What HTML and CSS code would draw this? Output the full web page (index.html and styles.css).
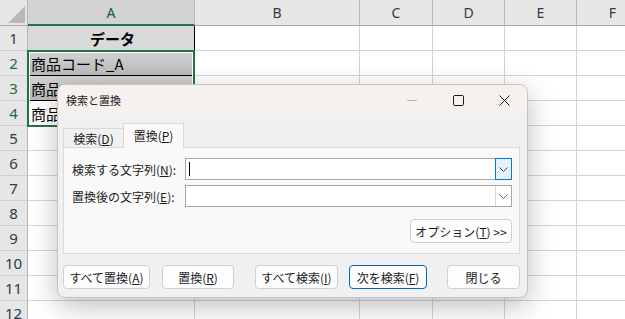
FILE: index.html
```html
<!DOCTYPE html>
<html lang="ja">
<head>
    <meta charset="UTF-8">
    <title>検索と置換</title>
    <link rel="stylesheet" href="styles.css">
</head>
<body>
    <div class="sheet">
        <div class="corner">
            <svg width="28" height="26" viewBox="0 0 28 26"><polygon points="25,6 25,23 8,23" fill="#b9b9b9"/></svg>
        </div>
        <div class="ch ch-sel">A</div>
        <div class="ch">B</div>
        <div class="ch">C</div>
        <div class="ch">D</div>
        <div class="ch">E</div>
        <div class="ch">F</div>

        <div class="rh">1</div>
        <div class="c a1">データ</div>
        <div class="c"></div><div class="c"></div><div class="c"></div><div class="c"></div><div class="c"></div>

        <div class="rh rh-sel">2</div>
        <div class="c a-fill">商品コード_A</div>
        <div class="c"></div><div class="c"></div><div class="c"></div><div class="c"></div><div class="c"></div>

        <div class="rh rh-sel">3</div>
        <div class="c a-fill">商品コード_B</div>
        <div class="c"></div><div class="c"></div><div class="c"></div><div class="c"></div><div class="c"></div>

        <div class="rh rh-sel">4</div>
        <div class="c a-active">商品コード_C</div>
        <div class="c"></div><div class="c"></div><div class="c"></div><div class="c"></div><div class="c"></div>

        <div class="rh">5</div>
        <div class="c"></div><div class="c"></div><div class="c"></div><div class="c"></div><div class="c"></div><div class="c"></div>
        <div class="rh">6</div>
        <div class="c"></div><div class="c"></div><div class="c"></div><div class="c"></div><div class="c"></div><div class="c"></div>
        <div class="rh">7</div>
        <div class="c"></div><div class="c"></div><div class="c"></div><div class="c"></div><div class="c"></div><div class="c"></div>
        <div class="rh">8</div>
        <div class="c"></div><div class="c"></div><div class="c"></div><div class="c"></div><div class="c"></div><div class="c"></div>
        <div class="rh">9</div>
        <div class="c"></div><div class="c"></div><div class="c"></div><div class="c"></div><div class="c"></div><div class="c"></div>
        <div class="rh">10</div>
        <div class="c"></div><div class="c"></div><div class="c"></div><div class="c"></div><div class="c"></div><div class="c"></div>
        <div class="rh">11</div>
        <div class="c"></div><div class="c"></div><div class="c"></div><div class="c"></div><div class="c"></div><div class="c"></div>
        <div class="rh">12</div>
        <div class="c"></div><div class="c"></div><div class="c"></div><div class="c"></div><div class="c"></div><div class="c"></div>

        <!-- selected range A2:A4 -->
        <div class="sel-box"></div>
    </div>

    <div class="dialog">
        <div class="titlebar">
            <span class="title">検索と置換</span>
            <div class="caption">
                <div class="cap-btn">
                    <svg width="10" height="10" viewBox="0 0 10 10"><line x1="0" y1="5.5" x2="10" y2="5.5" stroke="#b4b4b4" stroke-width="1"/></svg>
                </div>
                <div class="cap-btn">
                    <svg width="11" height="11" viewBox="0 0 11 11"><rect x="0.5" y="0.5" width="10" height="10" rx="1.2" fill="none" stroke="#1b1b1b" stroke-width="1"/></svg>
                </div>
                <div class="cap-btn">
                    <svg width="11" height="11" viewBox="0 0 11 11"><path d="M0.5 0.5 L10.5 10.5 M10.5 0.5 L0.5 10.5" stroke="#1b1b1b" stroke-width="1"/></svg>
                </div>
            </div>
        </div>

        <div class="body">
            <div class="tabs">
                <div class="tab">検索(<u>D</u>)</div>
                <div class="tab tab-active">置換(<u>P</u>)</div>
            </div>
            <div class="panel">
                <div class="field">
                    <label class="field-label">検索する文字列(<u>N</u>):</label>
                    <div class="combo">
                        <div class="combo-text"><span class="caret"></span></div>
                        <div class="combo-drop combo-drop-hot">
                            <svg width="9" height="5" viewBox="0 0 9 5"><path d="M0.5 0.5 L4.5 4.5 L8.5 0.5" fill="none" stroke="#444" stroke-width="1"/></svg>
                        </div>
                    </div>
                </div>
                <div class="field field-second">
                    <label class="field-label">置換後の文字列(<u>E</u>):</label>
                    <div class="combo">
                        <div class="combo-text"></div>
                        <div class="combo-drop">
                            <svg width="9" height="5" viewBox="0 0 9 5"><path d="M0.5 0.5 L4.5 4.5 L8.5 0.5" fill="none" stroke="#666" stroke-width="1"/></svg>
                        </div>
                    </div>
                </div>
                <div class="option-row">
                    <button class="btn btn-option">オプション(<u>T</u>) &gt;&gt;</button>
                </div>
            </div>

            <div class="actions">
                <button class="btn btn-replace-all">すべて置換(<u>A</u>)</button>
                <button class="btn btn-replace">置換(<u>R</u>)</button>
                <button class="btn btn-find-all">すべて検索(<u>I</u>)</button>
                <button class="btn btn-find-next btn-default">次を検索(<u>F</u>)</button>
                <button class="btn btn-close">閉じる</button>
            </div>
        </div>
    </div>
</body>
</html>
```

FILE: styles.css
```css
body {
    margin: 0;
    width: 625px;
    height: 319px;
    overflow: hidden;
    position: relative;
    background: #ffffff;
}

/* spreadsheet */
.sheet {
    position: relative;
    display: grid;
    grid-template-columns: 28px 167px 165px 73px 72px 72px 72px;
    grid-template-rows: 26px;
    grid-auto-rows: 25px;
    font-family: "Noto Sans CJK JP", sans-serif;
}
.corner {
    background: #e6e6e6;
    border-right: 1px solid #b5b5b5;
    border-bottom: 1px solid #a8a8a8;
    box-sizing: border-box;
}
.corner svg {
    display: block;
}
.ch {
    background: #e6e6e6;
    border-right: 1px solid #b8b8b8;
    border-bottom: 1px solid #a8a8a8;
    box-sizing: border-box;
    display: flex;
    align-items: center;
    justify-content: center;
    font-family: "Noto Sans", sans-serif;
    font-size: 14px;
    color: #2b3a4a;
}
.ch-sel {
    background: #d3d3d3;
    color: #185c37;
    border-bottom: 2px solid #217346;
}
.rh {
    background: #e6e6e6;
    border-right: 1px solid #b5b5b5;
    border-bottom: 1px solid #cfcfcf;
    box-sizing: border-box;
    display: flex;
    align-items: center;
    justify-content: center;
    font-family: "Noto Sans", sans-serif;
    font-size: 15px;
    color: #2b3a4a;
}
.rh-sel {
    color: #1d6a45;
}
.c {
    border-right: 1px solid #d4d4d4;
    border-bottom: 1px solid #d4d4d4;
    box-sizing: border-box;
    display: flex;
    align-items: center;
    padding-left: 3px;
    font-size: 15px;
    color: #000000;
    white-space: nowrap;
    overflow: hidden;
}
.a1 {
    background: #d9d9d9;
    justify-content: center;
    font-weight: bold;
    border-right: 1px solid #000000;
    border-bottom: 1px solid #000000;
}
.a-fill {
    background: linear-gradient(#d3d3d3, #bababa);
    border-right: 1px solid #000000;
    border-bottom: 1px solid #000000;
}
.a-active {
    background: #ffffff;
    border-right: 1px solid #000000;
    border-bottom: 1px solid #000000;
}
.sel-box {
    position: absolute;
    left: 27px;
    top: 50px;
    width: 168px;
    height: 77px;
    box-sizing: border-box;
    border: 2px solid #217346;
    box-shadow: inset 0 0 0 1px #ffffff;
}

/* find & replace dialog */
.dialog {
    position: absolute;
    left: 57px;
    top: 84px;
    width: 471px;
    height: 214px;
    box-sizing: border-box;
    border: 1px solid #c4c4c4;
    border-radius: 8px;
    background: #f0f0f0;
    box-shadow: 0 8px 28px rgba(0, 0, 0, 0.26);
    overflow: hidden;
    font-family: "Noto Sans CJK JP", sans-serif;
    font-size: 12px;
    color: #1b1b1b;
}
.titlebar {
    height: 30px;
    background: #f6f1ec;
    display: flex;
    align-items: center;
}
.title {
    padding-left: 8px;
    font-size: 11px;
}
.caption {
    margin-left: auto;
    display: flex;
}
.cap-btn {
    width: 46px;
    height: 30px;
    display: flex;
    align-items: center;
    justify-content: center;
}
.cap-btn svg {
    display: block;
}
.body {
    padding: 0 7px 0 5px;
}
.tabs {
    display: flex;
    align-items: flex-end;
    height: 25px;
    margin-top: 8px;
    margin-bottom: -1px;
    position: relative;
}
.tab {
    width: 60px;
    height: 20px;
    box-sizing: border-box;
    border: 1px solid #dadada;
    border-right: none;
    border-bottom: none;
    display: flex;
    align-items: center;
    justify-content: center;
    color: #1b1b1b;
}
.tab-active {
    width: 61px;
    height: 25px;
    border-right: 1px solid #dadada;
    background: #f9f9f9;
    padding-bottom: 2px;
}
.panel {
    height: 107px;
    box-sizing: border-box;
    border: 1px solid #dadada;
    background: #f9f9f9;
    padding: 10px 7px 0 8px;
}
.field {
    display: flex;
    align-items: center;
    height: 22px;
}
.field-second {
    margin-top: 5px;
}
.field-label {
    width: 113px;
    flex: none;
}
.combo {
    flex: 1;
    height: 22px;
    box-sizing: border-box;
    border: 1px solid #a6a6a6;
    background: #ffffff;
    display: flex;
}
.combo-text {
    flex: 1;
    display: flex;
    align-items: center;
    padding-left: 3px;
}
.caret {
    width: 1px;
    height: 14px;
    background: #000000;
}
.combo-drop {
    width: 16px;
    box-sizing: border-box;
    border-left: 1px solid #d6d6d6;
    display: flex;
    align-items: center;
    justify-content: center;
}
.combo-drop-hot {
    margin: -1px -1px -1px 0;
    width: 17px;
    border: 1px solid #0078d4;
    background: #e5f1fb;
}
.option-row {
    display: flex;
    justify-content: flex-end;
    margin-top: 12px;
}
.btn {
    height: 24px;
    box-sizing: border-box;
    border: 1px solid #d0d0d0;
    border-radius: 4px;
    background: #fdfdfd;
    font-family: "Noto Sans CJK JP", sans-serif;
    font-size: 12px;
    color: #1b1b1b;
    padding: 0;
    display: flex;
    align-items: center;
    justify-content: center;
}
.btn-option {
    width: 102px;
}
.btn-default {
    border-color: #0067c0;
}
.actions {
    display: flex;
    margin-top: 11px;
}
.btn-replace-all {
    width: 87px;
}
.btn-replace {
    width: 72px;
    margin-left: 12px;
}
.btn-find-all {
    width: 83px;
    margin-left: 21px;
}
.btn-find-next {
    width: 78px;
    margin-left: 11px;
}
.btn-close {
    width: 73px;
    margin-left: 20px;
}
```
